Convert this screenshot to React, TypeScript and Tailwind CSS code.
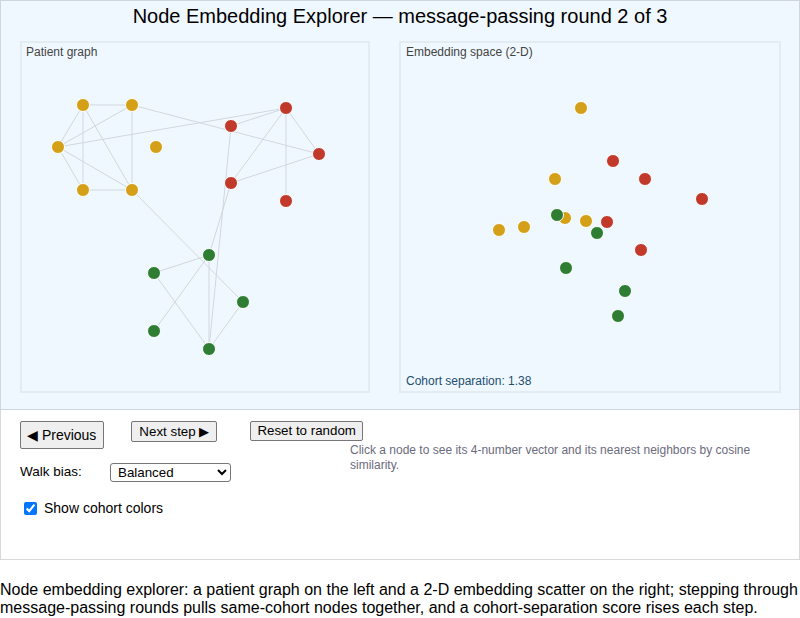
import React from 'react'

const YELLOW = '#d4a017'
const RED = '#c0392b'
const GREEN = '#2e7d32'

// patient graph nodes, page coordinates
const graphNodes: Record<string, [number, number, string]> = {
  y1: [83, 105, YELLOW],
  y2: [132, 105, YELLOW],
  y3: [58, 147, YELLOW],
  y4: [156, 147, YELLOW],
  y5: [83, 190, YELLOW],
  y6: [132, 190, YELLOW],
  r1: [286, 108, RED],
  r2: [231, 126, RED],
  r3: [319, 154, RED],
  r4: [231, 183, RED],
  r5: [286, 201, RED],
  g1: [209, 255, GREEN],
  g2: [154, 273, GREEN],
  g3: [243, 302, GREEN],
  g4: [154, 331, GREEN],
  g5: [209, 349, GREEN],
}

const edges: [string, string][] = [
  ['y1', 'y2'], ['y1', 'y3'], ['y1', 'y5'], ['y1', 'y6'],
  ['y2', 'y3'], ['y2', 'y6'], ['y2', 'r3'],
  ['y3', 'r1'], ['y3', 'y6'], ['y3', 'y5'], ['y5', 'y6'],
  ['y6', 'g3'],
  ['r1', 'r2'], ['r1', 'r4'], ['r1', 'r3'], ['r1', 'r5'],
  ['r4', 'r3'], ['r2', 'g5'], ['r4', 'g1'],
  ['g1', 'g2'], ['g1', 'g4'], ['g1', 'g5'],
  ['g2', 'g5'], ['g3', 'g5'],
]

const scatter: [number, number, string][] = [
  [581, 108, YELLOW],
  [555, 179, YELLOW],
  [565, 218, YELLOW],
  [586, 221, YELLOW],
  [499, 230, YELLOW],
  [524, 227, YELLOW],
  [613, 161, RED],
  [645, 179, RED],
  [702, 199, RED],
  [607, 222, RED],
  [641, 250, RED],
  [557, 215, GREEN],
  [597, 233, GREEN],
  [566, 268, GREEN],
  [625, 291, GREEN],
  [618, 316, GREEN],
]

function Dot({ x, y, c }: { x: number; y: number; c: string }) {
  return <circle cx={x} cy={y} r={6.5} fill={c} stroke="#ffffff" strokeWidth={1} />
}

export default function App() {
  return (
    <div className="w-[800px] bg-white text-black" style={{ fontFamily: '"Liberation Sans", Arial, sans-serif' }}>
      <section className="bg-[#f0f8ff] border border-[#cfd6de] h-[410px] flex flex-col">
        <h1 className="text-[20px] leading-[23px] text-center pt-[4px] text-black">
          Node Embedding Explorer — message-passing round 2 of 3
        </h1>
        <div className="flex mt-[13px] pl-[19px] gap-[29px]">
          <div className="relative w-[350px] h-[352px] border-2 border-[#e3ebf3]">
            <div className="absolute left-[4px] top-0 text-[12px] text-[#444]">Patient graph</div>
            <svg width={346} height={348} viewBox="22 43 346 348" className="block">
              {edges.map(([a, b]) => {
                const p = graphNodes[a]
                const q = graphNodes[b]
                return <line key={a + b} x1={p[0]} y1={p[1]} x2={q[0]} y2={q[1]} stroke="#d2d7de" strokeWidth={1} />
              })}
              {Object.entries(graphNodes).map(([k, [x, y, c]]) => (
                <Dot key={k} x={x} y={y} c={c} />
              ))}
            </svg>
          </div>
          <div className="relative w-[382px] h-[352px] border-2 border-[#e3ebf3]">
            <div className="absolute left-[5px] top-0 text-[12px] text-[#444]">Embedding space (2-D)</div>
            <svg width={378} height={348} viewBox="401 43 378 348" className="block">
              {scatter.map(([x, y, c], i) => (
                <Dot key={i} x={x} y={y} c={c} />
              ))}
            </svg>
            <div className="absolute left-[5px] bottom-[1px] text-[12px] text-[#1d4e6e]">Cohort separation: 1.38</div>
          </div>
        </div>
      </section>

      <section className="border border-t-0 border-[#d9d9d9] h-[150px] pt-[11px] pl-[19px]">
        <div className="flex items-start">
          <button className="text-[14px] leading-[16px] pl-[6px] pr-[7px] py-[5px] bg-[#efefef] border border-[#767676] rounded-[2px]">
            ◀ Previous
          </button>
          <button className="ml-[27px] text-[13.33px] leading-[17px] px-[7px] py-[1px] bg-[#efefef] border border-[#767676] rounded-[2px]">
            Next step ▶
          </button>
          <button className="ml-[33px] text-[13.33px] leading-[16px] px-[6px] py-[1px] bg-[#efefef] border border-[#767676] rounded-[2px]">
            Reset to random
          </button>
        </div>
        <div className="flex items-start">
          <div className="w-[331px] shrink-0">
            <div className="flex items-center mt-[13px]">
              <span className="w-[90px] text-[13.5px]">Walk bias:</span>
              <select
                defaultValue="Balanced"
                className="w-[121px] h-[19px] text-[13.33px] border border-[#767676] rounded-[3px] bg-white pl-[3px]"
                style={{ appearance: 'auto' }}
              >
                <option>Balanced</option>
                <option>Explore</option>
                <option>Local</option>
              </select>
            </div>
            <label className="flex items-center mt-[16px] text-[14px]">
              <input type="checkbox" defaultChecked className="w-[13px] h-[13px] ml-[4px] mr-[7px] accent-[#0075ff]" />
              Show cohort colors
            </label>
          </div>
          <p className="-mt-[6px] -ml-[1px] w-[430px] text-[12px] leading-[15px] text-[#6b6b7d]">
            Click a node to see its 4-number vector and its nearest neighbors by cosine similarity.
          </p>
        </div>
      </section>

      <p className="mt-[21px] text-[16px] leading-[18px]">
        Node embedding explorer: a patient graph on the left and a 2-D embedding scatter on the right; stepping through
        message-passing rounds pulls same-cohort nodes together, and a cohort-separation score rises each step.
      </p>
    </div>
  )
}
